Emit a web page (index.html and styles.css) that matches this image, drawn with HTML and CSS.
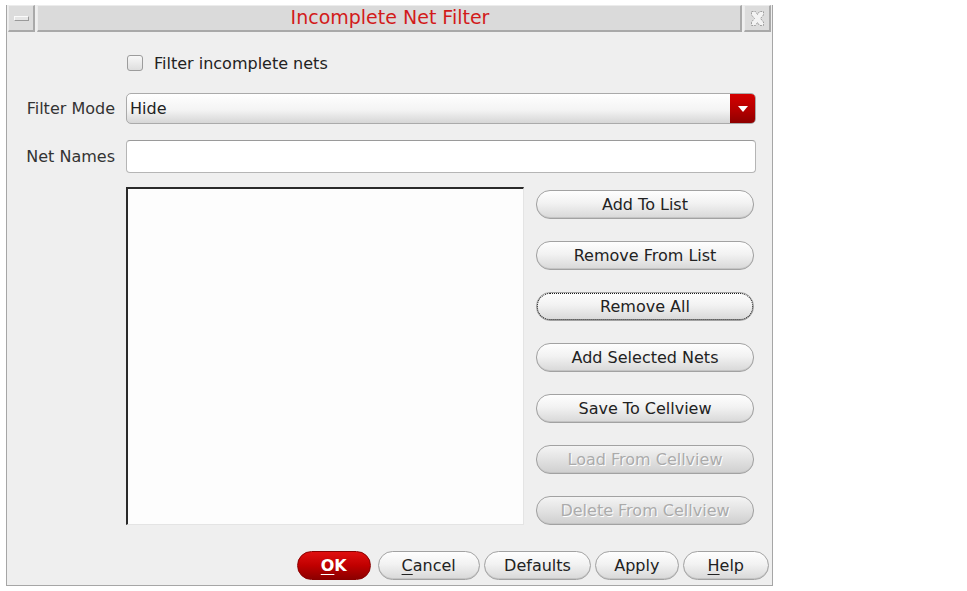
FILE: index.html
```html
<!DOCTYPE html>
<html>
<head>
<meta charset="utf-8">
<link rel="stylesheet" href="styles.css">
</head>
<body>
<div class="window">
  <div class="titlebar">
    <div class="tb-box"><span class="min-icon"></span></div>
    <div class="tb-title">Incomplete Net Filter</div>
    <div class="tb-box">
      <svg width="17" height="17" viewBox="0 0 17 17" class="close-icon">
        <path d="M2.5 1.5 L6.5 1.5 L8.5 4.5 L10.5 1.5 L14.5 1.5 L14.5 5 L11.5 8.5 L14.5 12 L14.5 15.5 L10.5 15.5 L8.5 12.5 L6.5 15.5 L2.5 15.5 L2.5 12 L5.5 8.5 L2.5 5 Z" fill="#f3f3f3" stroke="#9e9e9e" stroke-width="1" stroke-dasharray="2 1"/>
      </svg>
    </div>
  </div>
  <div class="content">
    <div class="check-row">
      <span class="checkbox"></span>
      <span class="check-label">Filter incomplete nets</span>
    </div>
    <div class="form-row mode-row">
      <label class="lbl">Filter Mode</label>
      <div class="combo">
        <span class="combo-text">Hide</span>
        <span class="combo-btn"><span class="tri"></span></span>
      </div>
    </div>
    <div class="form-row names-row">
      <label class="lbl">Net Names</label>
      <div class="textfield"></div>
    </div>
    <div class="list-row">
      <div class="listbox"></div>
      <div class="btn-col">
        <div class="btn">Add To List</div>
        <div class="btn">Remove From List</div>
        <div class="btn focus">Remove All</div>
        <div class="btn">Add Selected Nets</div>
        <div class="btn">Save To Cellview</div>
        <div class="btn disabled">Load From Cellview</div>
        <div class="btn disabled">Delete From Cellview</div>
      </div>
    </div>
    <div class="footer">
      <div class="btn ok"><u>O</u>K</div>
      <div class="btn cancel"><u>C</u>ancel</div>
      <div class="btn defaults">Defaults</div>
      <div class="btn apply">Apply</div>
      <div class="btn help"><u>H</u>elp</div>
    </div>
  </div>
</div>
</body>
</html>
```

FILE: styles.css
```css
* { box-sizing: border-box; }
html, body { margin: 0; padding: 0; background: #ffffff; }
body {
  font-family: "DejaVu Sans", "Noto Sans", sans-serif;
  font-size: 16px;
  color: #222;
  width: 967px;
  height: 591px;
  overflow: hidden;
}
.window {
  margin: 5px 0 0 6px;
  width: 767px;
  height: 581px;
  border: 1px solid #a6a6a6;
  border-top: none;
  background: #efefef;
  display: flex;
  flex-direction: column;
}
.titlebar {
  height: 27px;
  display: flex;
  gap: 2px;
  background: #efefef;
  padding: 0 1px;
}
.tb-box {
  width: 27px;
  height: 27px;
  flex: none;
  background: #dcdcdc;
  border-top: 1px solid #ececec;
  border-left: 1px solid #ececec;
  border-right: 2px solid #a9a9a9;
  border-bottom: 2px solid #a9a9a9;
  display: flex;
  align-items: center;
  justify-content: center;
}
.close-icon { flex: none; display: block; }
.min-icon {
  width: 15px;
  height: 5px;
  background: #e6e6e6;
  border-top: 1px solid #fafafa;
  border-left: 1px solid #fafafa;
  border-right: 1px solid #9a9a9a;
  border-bottom: 1px solid #9a9a9a;
}
.tb-title {
  flex: 1;
  height: 27px;
  background: #dadada;
  border-top: 1px solid #ececec;
  border-left: 1px solid #ececec;
  border-right: 2px solid #a9a9a9;
  border-bottom: 2px solid #a9a9a9;
  color: #d21a1a;
  font-size: 19px;
  text-align: center;
  line-height: 23px;
  padding-left: 2px;
}
.content {
  flex: 1;
  display: flex;
  flex-direction: column;
  padding: 0 16px 0 1px;
}
.check-row {
  display: flex;
  align-items: center;
  margin-top: 22px;
  padding-left: 119px;
  height: 18px;
}
.checkbox {
  width: 16px;
  height: 16px;
  border: 1px solid #9c9c9c;
  border-radius: 3px;
  background: linear-gradient(#f8f8f8, #dedede);
  margin-right: 11px;
}
.form-row {
  display: flex;
  align-items: center;
}
.lbl {
  width: 107px;
  text-align: right;
  margin-right: 11px;
  color: #333;
}
.mode-row { margin-top: 21px; height: 31px; }
.names-row { margin-top: 16px; height: 33px; }
.combo {
  flex: 1;
  height: 31px;
  border: 1px solid #aaa;
  border-radius: 5px;
  background: linear-gradient(#ffffff, #f4f4f4 55%, #d6d6d6);
  display: flex;
  align-items: center;
  overflow: hidden;
}
.combo-text { flex: 1; padding-left: 3px; color: #222; }
.combo-btn {
  width: 25px;
  height: 100%;
  background: linear-gradient(#d40000, #b00000 60%, #8e0000);
  display: flex;
  align-items: center;
  justify-content: center;
}
.tri {
  width: 0; height: 0;
  border-left: 5px solid transparent;
  border-right: 5px solid transparent;
  border-top: 6px solid #fff;
}
.textfield {
  flex: 1;
  height: 33px;
  background: #fff;
  border: 1px solid #b5b5b5;
  border-top-color: #9a9a9a;
  border-radius: 4px;
}
.list-row {
  display: flex;
  margin-top: 14px;
  height: 338px;
}
.listbox {
  margin-left: 118px;
  width: 398px;
  height: 338px;
  background: #fdfdfd;
  border-top: 2px solid #2a2a2a;
  border-left: 2px solid #2a2a2a;
  border-right: 1px solid #e4e4e4;
  border-bottom: 1px solid #e4e4e4;
}
.btn-col {
  margin-left: 12px;
  width: 218px;
  display: flex;
  flex-direction: column;
  gap: 22px;
  padding-top: 3px;
}
.btn {
  height: 29px;
  border: 1px solid #a2a2a2;
  border-radius: 14px;
  background: linear-gradient(#fefefe, #f2f2f2 45%, #d8d8d8);
  box-shadow: inset 0 -1px 0 #c4c4c4;
  display: flex;
  align-items: center;
  justify-content: center;
  color: #222;
  white-space: nowrap;
}
.btn.focus {
  outline: 1px dotted #1a1a1a;
  outline-offset: -2px;
}
.btn.disabled {
  color: #ababab;
  text-shadow: 1px 1px 0 #ffffff;
  background: linear-gradient(#f4f4f4, #e4e4e4 45%, #cfcfcf);
}
.footer {
  display: flex;
  margin-top: 26px;
  padding-left: 289px;
  gap: 4px;
  margin-right: -13px;
}
.footer .btn { height: 29px; border-radius: 15px; }
.btn.ok {
  width: 74px;
  background: linear-gradient(#e01010, #c00000 50%, #8c0000);
  border-color: #8a0000;
  box-shadow: none;
  color: #fff;
  font-weight: bold;
  margin-right: 3px;
}
.btn.cancel { width: 103px; }
.btn.defaults { width: 108px; }
.btn.apply { width: 84px; }
.btn.help { width: 87px; }
u { text-underline-offset: 3px; }
```
